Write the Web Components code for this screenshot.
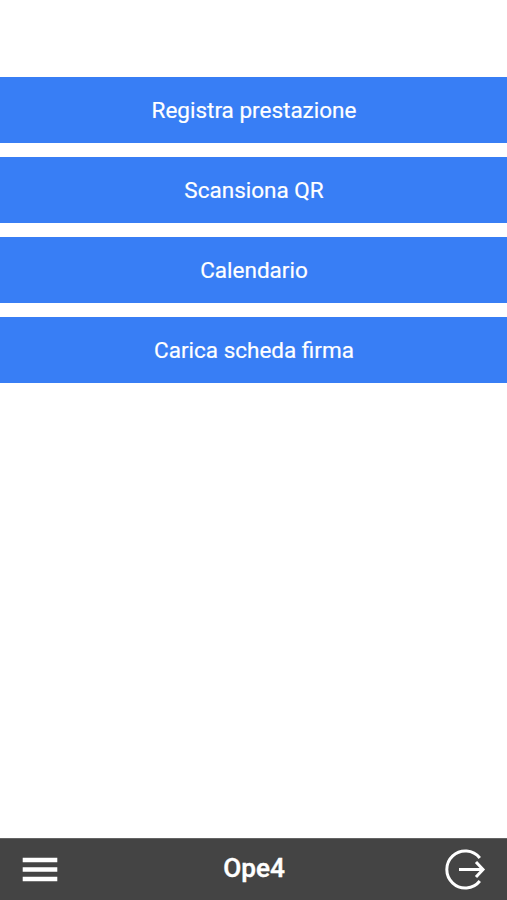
<!DOCTYPE html>
<html lang="it"><head><meta charset="utf-8"><title>Ope4</title>
<style>html,body{margin:0;height:100%}body{background:#fff;font-family:Roboto,"Liberation Sans",sans-serif}</style></head>
<body><ope-app></ope-app>
<script>
const def=(name,html)=>customElements.define(name,class extends HTMLElement{constructor(){super();this.attachShadow({mode:'open'}).innerHTML=html}});
def('menu-button',`<style>:host{display:block}button{display:block;width:100%;height:66px;border:0;padding:0 0 0 1px;background:#387ef5;color:#fff;font:400 22.5px Roboto,sans-serif;line-height:66px;text-align:center;-webkit-text-stroke:.2px #fff}</style><button><slot></slot></button>`);
def('bottom-bar',`<style>:host{display:flex;height:62px;box-sizing:border-box;background:#444;color:#fff;align-items:center;justify-content:space-between;border-top:1px solid #646464}h1{margin:0;padding:0 0 2px 1px;font:500 26.2px/59px Roboto,sans-serif;-webkit-text-stroke:.4px #fff}svg{display:block;width:80px;height:61px}</style>
<svg viewBox="0 839 80 61"><path d="M22.7 860h34.6M22.7 869.5h34.6M22.7 879h34.6" stroke="#fff" stroke-width="4.4"/></svg>
<h1><slot></slot></h1>
<svg viewBox="427 839 80 61" fill="none" stroke="#fff" stroke-width="3"><path d="M479.8 858a18.5 18.5 0 1 0 0 23M459 869.5h23.5M476 862l7 7.5-7 7.5"/></svg>`);
def('ope-app',`<style>:host{display:flex;flex-direction:column;height:900px}main{flex:1;display:flex;flex-direction:column;gap:14.2px;padding-top:76.6px}</style>
<main><menu-button>Registra prestazione</menu-button><menu-button>Scansiona QR</menu-button><menu-button>Calendario</menu-button><menu-button>Carica scheda firma</menu-button></main><bottom-bar>Ope4</bottom-bar>`);
</script></body></html>
